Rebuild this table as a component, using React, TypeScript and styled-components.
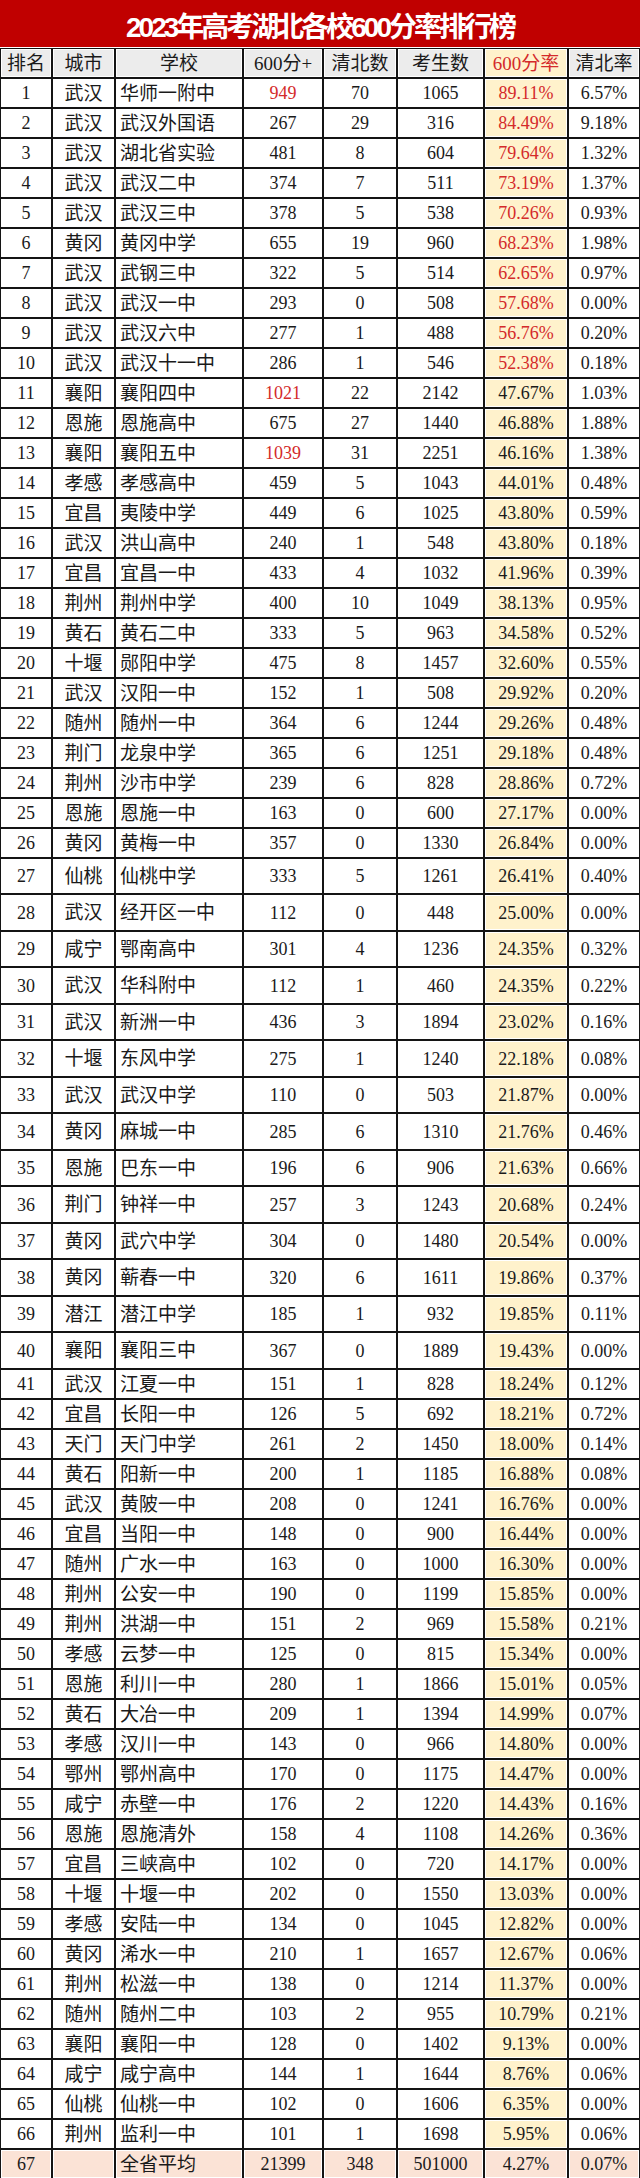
import React from "react";
import styled, { createGlobalStyle } from "styled-components";

const GlobalStyle = createGlobalStyle`
  html, body { margin: 0; padding: 0; background: #ffffff; }
  body { width: 640px; }
`;

type Row = {
  rank: number;
  city: string;
  school: string;
  s600: string;
  qb: string;
  total: string;
  rate: string;
  qbRate: string;
  hot?: boolean;
};

const raw: string[] = [
  "1|武汉|华师一附中|949|70|1065|89.11%|6.57%|h",
  "2|武汉|武汉外国语|267|29|316|84.49%|9.18%",
  "3|武汉|湖北省实验|481|8|604|79.64%|1.32%",
  "4|武汉|武汉二中|374|7|511|73.19%|1.37%",
  "5|武汉|武汉三中|378|5|538|70.26%|0.93%",
  "6|黄冈|黄冈中学|655|19|960|68.23%|1.98%",
  "7|武汉|武钢三中|322|5|514|62.65%|0.97%",
  "8|武汉|武汉一中|293|0|508|57.68%|0.00%",
  "9|武汉|武汉六中|277|1|488|56.76%|0.20%",
  "10|武汉|武汉十一中|286|1|546|52.38%|0.18%",
  "11|襄阳|襄阳四中|1021|22|2142|47.67%|1.03%|h",
  "12|恩施|恩施高中|675|27|1440|46.88%|1.88%",
  "13|襄阳|襄阳五中|1039|31|2251|46.16%|1.38%|h",
  "14|孝感|孝感高中|459|5|1043|44.01%|0.48%",
  "15|宜昌|夷陵中学|449|6|1025|43.80%|0.59%",
  "16|武汉|洪山高中|240|1|548|43.80%|0.18%",
  "17|宜昌|宜昌一中|433|4|1032|41.96%|0.39%",
  "18|荆州|荆州中学|400|10|1049|38.13%|0.95%",
  "19|黄石|黄石二中|333|5|963|34.58%|0.52%",
  "20|十堰|郧阳中学|475|8|1457|32.60%|0.55%",
  "21|武汉|汉阳一中|152|1|508|29.92%|0.20%",
  "22|随州|随州一中|364|6|1244|29.26%|0.48%",
  "23|荆门|龙泉中学|365|6|1251|29.18%|0.48%",
  "24|荆州|沙市中学|239|6|828|28.86%|0.72%",
  "25|恩施|恩施一中|163|0|600|27.17%|0.00%",
  "26|黄冈|黄梅一中|357|0|1330|26.84%|0.00%",
  "27|仙桃|仙桃中学|333|5|1261|26.41%|0.40%",
  "28|武汉|经开区一中|112|0|448|25.00%|0.00%",
  "29|咸宁|鄂南高中|301|4|1236|24.35%|0.32%",
  "30|武汉|华科附中|112|1|460|24.35%|0.22%",
  "31|武汉|新洲一中|436|3|1894|23.02%|0.16%",
  "32|十堰|东风中学|275|1|1240|22.18%|0.08%",
  "33|武汉|武汉中学|110|0|503|21.87%|0.00%",
  "34|黄冈|麻城一中|285|6|1310|21.76%|0.46%",
  "35|恩施|巴东一中|196|6|906|21.63%|0.66%",
  "36|荆门|钟祥一中|257|3|1243|20.68%|0.24%",
  "37|黄冈|武穴中学|304|0|1480|20.54%|0.00%",
  "38|黄冈|蕲春一中|320|6|1611|19.86%|0.37%",
  "39|潜江|潜江中学|185|1|932|19.85%|0.11%",
  "40|襄阳|襄阳三中|367|0|1889|19.43%|0.00%",
  "41|武汉|江夏一中|151|1|828|18.24%|0.12%",
  "42|宜昌|长阳一中|126|5|692|18.21%|0.72%",
  "43|天门|天门中学|261|2|1450|18.00%|0.14%",
  "44|黄石|阳新一中|200|1|1185|16.88%|0.08%",
  "45|武汉|黄陂一中|208|0|1241|16.76%|0.00%",
  "46|宜昌|当阳一中|148|0|900|16.44%|0.00%",
  "47|随州|广水一中|163|0|1000|16.30%|0.00%",
  "48|荆州|公安一中|190|0|1199|15.85%|0.00%",
  "49|荆州|洪湖一中|151|2|969|15.58%|0.21%",
  "50|孝感|云梦一中|125|0|815|15.34%|0.00%",
  "51|恩施|利川一中|280|1|1866|15.01%|0.05%",
  "52|黄石|大冶一中|209|1|1394|14.99%|0.07%",
  "53|孝感|汉川一中|143|0|966|14.80%|0.00%",
  "54|鄂州|鄂州高中|170|0|1175|14.47%|0.00%",
  "55|咸宁|赤壁一中|176|2|1220|14.43%|0.16%",
  "56|恩施|恩施清外|158|4|1108|14.26%|0.36%",
  "57|宜昌|三峡高中|102|0|720|14.17%|0.00%",
  "58|十堰|十堰一中|202|0|1550|13.03%|0.00%",
  "59|孝感|安陆一中|134|0|1045|12.82%|0.00%",
  "60|黄冈|浠水一中|210|1|1657|12.67%|0.06%",
  "61|荆州|松滋一中|138|0|1214|11.37%|0.00%",
  "62|随州|随州二中|103|2|955|10.79%|0.21%",
  "63|襄阳|襄阳一中|128|0|1402|9.13%|0.00%",
  "64|咸宁|咸宁高中|144|1|1644|8.76%|0.06%",
  "65|仙桃|仙桃一中|102|0|1606|6.35%|0.00%",
  "66|荆州|监利一中|101|1|1698|5.95%|0.06%",
];

const rows: Row[] = raw.map((line) => {
  const p = line.split("|");
  return {
    rank: Number(p[0]),
    city: p[1],
    school: p[2],
    s600: p[3],
    qb: p[4],
    total: p[5],
    rate: p[6],
    qbRate: p[7],
    hot: p[8] === "h",
  };
});

const RED = "#d42a2a";
const YELLOW = "#fff2cc";
const GRAY = "#ececec";
const PEACH = "#fbe3d6";

const Page = styled.div`
  width: 640px;
  background: #ffffff;
`;

const TitleBar = styled.h1`
  margin: 0 0 1px 0;
  height: 47px;
  background: #c00000;
  color: #ffffff;
  display: flex;
  align-items: center;
  justify-content: center;
  font-family: "Liberation Sans", "Noto Sans CJK SC", sans-serif;
  font-weight: 700;
  font-size: 28px;
  letter-spacing: -3px;
  padding-top: 2px;
  box-sizing: border-box;
`;

const Table = styled.div`
  display: flex;
  flex-direction: column;
  gap: 2px;
  padding: 1px;
  background: #141414;
`;

const RowGrid = styled.div<{ $h: number }>`
  display: grid;
  grid-template-columns: 50px 61px 126px 78px 72px 85px 82px 70px;
  column-gap: 2px;
  height: ${(p) => p.$h}px;
`;

const Cell = styled.div<{
  $bg?: string;
  $color?: string;
  $left?: boolean;
  $cjk?: boolean;
}>`
  display: flex;
  align-items: center;
  justify-content: ${(p) => (p.$left ? "flex-start" : "center")};
  padding-left: ${(p) => (p.$left ? "4px" : "0")};
  background: ${(p) => p.$bg || "#ffffff"};
  box-shadow: inset 0 0 0 1px #ffffff;
  color: ${(p) => p.$color || "#1a1a1a"};
  font-family: "Liberation Serif", "Noto Sans CJK SC", serif;
  font-size: ${(p) => (p.$cjk ? "19px" : "18px")};
  line-height: 1;
  white-space: nowrap;
  overflow: hidden;
`;

const rowHeight = (rank: number) => {
  if (rank >= 27 && rank <= 40) return rank % 2 === 0 ? 35 : 34;
  return 28;
};

export default function App() {
  return (
    <Page>
      <GlobalStyle />
      <TitleBar>2023年高考湖北各校600分率排行榜</TitleBar>
      <Table>
        <RowGrid $h={28}>
          <Cell $bg={GRAY} $cjk>排名</Cell>
          <Cell $bg={GRAY} $cjk>城市</Cell>
          <Cell $bg={GRAY} $cjk>学校</Cell>
          <Cell $bg={GRAY} $cjk>600分+</Cell>
          <Cell $bg={GRAY} $cjk>清北数</Cell>
          <Cell $bg={GRAY} $cjk>考生数</Cell>
          <Cell $bg={YELLOW} $color={RED} $cjk>600分率</Cell>
          <Cell $bg={GRAY} $cjk>清北率</Cell>
        </RowGrid>
        {rows.map((r) => (
          <RowGrid key={r.rank} $h={rowHeight(r.rank)}>
            <Cell>{r.rank}</Cell>
            <Cell $cjk>{r.city}</Cell>
            <Cell $cjk $left>{r.school}</Cell>
            <Cell $color={r.hot ? RED : undefined}>{r.s600}</Cell>
            <Cell>{r.qb}</Cell>
            <Cell>{r.total}</Cell>
            <Cell $bg={YELLOW} $color={r.rank <= 10 ? RED : undefined}>
              {r.rate}
            </Cell>
            <Cell>{r.qbRate}</Cell>
          </RowGrid>
        ))}
        <RowGrid $h={28}>
          <Cell $bg={PEACH}>67</Cell>
          <Cell $bg={PEACH} $cjk></Cell>
          <Cell $bg={PEACH} $cjk $left>全省平均</Cell>
          <Cell $bg={PEACH}>21399</Cell>
          <Cell $bg={PEACH}>348</Cell>
          <Cell $bg={PEACH}>501000</Cell>
          <Cell $bg={PEACH}>4.27%</Cell>
          <Cell $bg={PEACH}>0.07%</Cell>
        </RowGrid>
      </Table>
    </Page>
  );
}
